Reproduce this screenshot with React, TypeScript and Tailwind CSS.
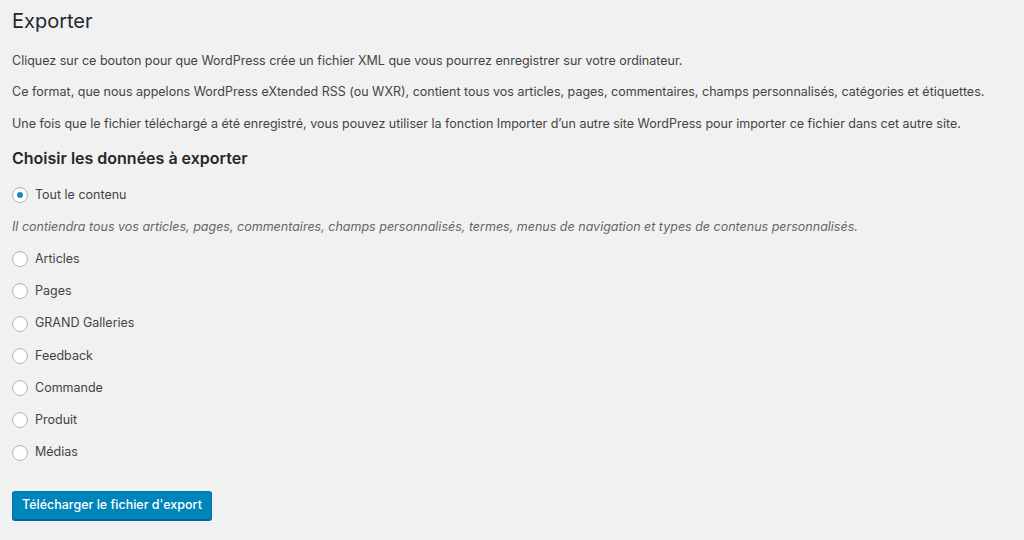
import React from "react";

const font = { fontFamily: 'Inter, "Liberation Sans", Arial, sans-serif' };

function Radio({ label, checked }: { label: string; checked?: boolean }) {
  return (
    <label className="flex h-[20px] items-center text-[12.5px] text-[#444]">
      <span className="flex h-[16px] w-[16px] items-center justify-center rounded-full border border-[#b4b9be] bg-white shadow-[inset_0_1px_2px_rgba(0,0,0,0.07)]">
        {checked && <span className="h-[6px] w-[6px] rounded-full bg-[#1e8cbe]" />}
      </span>
      <span className="ml-[7px]">{label}</span>
    </label>
  );
}

export default function App() {
  const items = ["Articles", "Pages", "GRAND Galleries", "Feedback", "Commande", "Produit", "Médias"];
  return (
    <div className="min-h-[540px] w-[1024px] bg-[#f1f1f1] pl-[12px] pt-[7px]" style={font}>
      <h1 className="h-[29px] text-[20px] leading-[29px] font-normal text-[#23282d]">Exporter</h1>
      <p className="mt-[15px] h-[20px] text-[12.5px] leading-[20px] text-[#444]">
        Cliquez sur ce bouton pour que WordPress crée un fichier XML que vous pourrez enregistrer sur votre ordinateur.
      </p>
      <p className="mt-[11px] h-[20px] text-[12.5px] leading-[20px] text-[#444]">
        Ce format, que nous appelons WordPress eXtended RSS (ou WXR), contient tous vos articles, pages, commentaires, champs personnalisés, catégories et étiquettes.
      </p>
      <p className="mt-[12px] h-[20px] text-[12.5px] leading-[20px] text-[#444]">
        Une fois que le fichier téléchargé a été enregistré, vous pouvez utiliser la fonction Importer d’un autre site WordPress pour importer ce fichier dans cet autre site.
      </p>
      <h2 className="mt-[12px] h-[24px] text-[16px] leading-[24px] font-semibold text-[#23282d]">
        Choisir les données à exporter
      </h2>
      <div className="mt-[15px]">
        <Radio label="Tout le contenu" checked />
      </div>
      <p className="mt-[12px] h-[20px] text-[12.5px] leading-[20px] italic text-[#666]">
        Il contiendra tous vos articles, pages, commentaires, champs personnalisés, termes, menus de navigation et types de contenus personnalisés.
      </p>
      <div className="mt-[12px] flex flex-col gap-[12.3px]">
        {items.map((it) => (
          <Radio key={it} label={it} />
        ))}
      </div>
      <button className="mt-[28px] h-[29px] rounded-[3px] border border-[#0073aa] border-b-[#006799] bg-[#0085ba] px-[9px] text-[12.5px] font-medium text-white shadow-[0_1px_0_#006799]">
        Télécharger le fichier d'export
      </button>
    </div>
  );
}
